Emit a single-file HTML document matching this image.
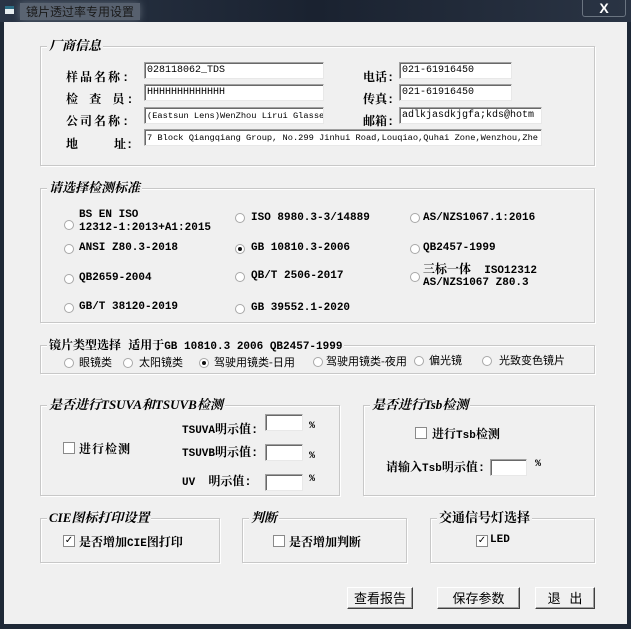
<!DOCTYPE html>
<html><head><meta charset="utf-8"><style>
*{margin:0;padding:0;box-sizing:border-box}
body{width:631px;height:629px;background:#1e2836;position:relative;overflow:hidden;font-family:"Liberation Mono","Noto Serif CJK SC",monospace;font-size:11px;font-weight:bold;color:#000}
.title{position:absolute;left:0;top:0;width:631px;height:22px;background:linear-gradient(90deg,#2a3546,#1a2230 50%,#2a3444);}
.title span{position:absolute;left:20px;top:3px;color:#1a1a1a;font-family:"Noto Sans CJK SC",sans-serif;font-weight:normal;font-size:12px;background:rgba(150,160,170,.45);padding:0 6px;box-shadow:0 0 8px rgba(150,160,170,.5)}
.ico{position:absolute;left:5px;top:6px;width:9px;height:8px;background:#e8eef0;border-top:3px solid #2c6d84}
.close{position:absolute;left:582px;top:0;width:44px;height:17px;border:1px solid #6a7480;border-top:none;border-radius:0 0 3px 3px;color:#fff;font-family:"Liberation Sans",sans-serif;font-size:14px;text-align:center;line-height:16px}
.client{position:absolute;left:4px;top:22px;width:623px;height:602px;background:#f0f0f0}
.a{position:absolute;white-space:nowrap}
.k{font-size:12px}
.g{position:absolute;border:1px solid #c8c8c8;box-shadow:inset 1px 1px 0 #fff,1px 1px 0 #fff}
.gl{position:absolute;background:#f0f0f0;padding:0 2px;font-style:italic;font-size:13px;top:-9px;left:6px;line-height:16px;font-family:"Liberation Serif","Noto Serif CJK SC",serif}
.in{position:absolute;background:#fff;border:1px solid #a0a0a0;border-right-color:#e8e8e8;border-bottom-color:#e8e8e8;box-shadow:inset 1px 1px 0 #696969;font-family:"Liberation Mono","Noto Sans CJK SC",monospace;font-weight:normal;font-size:8.7px;padding:2px 2px;overflow:hidden;white-space:nowrap;line-height:12px}
.in.big{font-size:10px}
.r{position:absolute;width:10px;height:10px;border-radius:50%;border:1px solid #a8a8a8;background:#fff}
.r.on::after{content:"";position:absolute;left:2px;top:2px;width:4px;height:4px;border-radius:50%;background:#111}
.c{position:absolute;width:12px;height:12px;border:1px solid #8a8a8a;background:#fff;font-size:10px;line-height:10px;text-align:center;font-family:"DejaVu Sans",sans-serif;font-weight:normal}
.n{font-weight:normal;font-family:"Noto Sans CJK SC",sans-serif;font-size:11px}
.b{position:absolute;height:22px;background:#f0f0f0;border:1px solid #fff;border-right-color:#404040;border-bottom-color:#404040;box-shadow:inset -1px -1px 0 #a0a0a0;text-align:center;line-height:20px;font-size:13px;font-weight:normal;font-family:"Noto Sans CJK SC",sans-serif}
</style></head><body>
<div class="title"><div class="ico"></div><span>镜片透过率专用设置</span><div class="close">X</div></div>
<div class="client"></div>
<div style="position:absolute;left:0;top:0">
<div class="g" style="left:40px;top:46px;width:555px;height:120px"><div class="gl">厂商信息</div></div>
<div class="a k" style="left:66px;top:68px;letter-spacing:2px">样品名称:</div>
<div class="a k" style="left:66px;top:90px;letter-spacing:2px">检 查 员:</div>
<div class="a k" style="left:66px;top:112px;letter-spacing:2px">公司名称:</div>
<div class="a k" style="left:66px;top:135px">地</div><div class="a k" style="left:114px;top:135px">址:</div>
<div class="a k" style="left:363px;top:68px">电话:</div>
<div class="a k" style="left:363px;top:90px">传真:</div>
<div class="a k" style="left:363px;top:112px">邮箱:</div>
<div class="in big" style="left:144px;top:62px;width:180px;height:17px">028118062_TDS</div>
<div class="in big" style="left:144px;top:84px;width:180px;height:17px">HHHHHHHHHHHHH</div>
<div class="in" style="left:144px;top:107px;width:180px;height:17px">(Eastsun Lens)WenZhou Lirui Glasses</div>
<div class="in" style="left:144px;top:129px;width:398px;height:17px">7 Block Qiangqiang Group, No.299 Jinhui Road,Louqiao,Quhai Zone,Wenzhou,Zhe</div>
<div class="in big" style="left:399px;top:62px;width:113px;height:17px">021-61916450</div>
<div class="in big" style="left:399px;top:84px;width:113px;height:17px">021-61916450</div>
<div class="in" style="left:399px;top:107px;width:143px;height:17px;font-size:10px">adlkjasdkjgfa;kds@hotm</div>

<div class="g" style="left:40px;top:188px;width:555px;height:135px"><div class="gl">请选择检测标准</div></div>
<div class="r" style="left:64px;top:220px"></div><div class="a" style="left:79px;top:209px;line-height:13px">BS EN ISO<br>12312-1:2013+A1:2015</div>
<div class="r" style="left:235px;top:213px"></div><div class="a" style="left:251px;top:212px">ISO 8980.3-3/14889</div>
<div class="r" style="left:410px;top:213px"></div><div class="a" style="left:423px;top:212px">AS/NZS1067.1:2016</div>
<div class="r" style="left:64px;top:244px"></div><div class="a" style="left:79px;top:242px">ANSI Z80.3-2018</div>
<div class="r on" style="left:235px;top:244px"></div><div class="a" style="left:251px;top:242px">GB 10810.3-2006</div>
<div class="r" style="left:410px;top:244px"></div><div class="a" style="left:423px;top:242px">QB2457-1999</div>
<div class="r" style="left:64px;top:274px"></div><div class="a" style="left:79px;top:272px">QB2659-2004</div>
<div class="r" style="left:235px;top:272px"></div><div class="a" style="left:251px;top:270px">QB/T 2506-2017</div>
<div class="r" style="left:410px;top:272px"></div><div class="a" style="left:423px;top:264px;line-height:12px"><span class="k">三标一体</span>&nbsp;&nbsp;ISO12312<br>AS/NZS1067 Z80.3</div>
<div class="r" style="left:64px;top:303px"></div><div class="a" style="left:79px;top:301px">GB/T 38120-2019</div>
<div class="r" style="left:235px;top:304px"></div><div class="a" style="left:251px;top:302px">GB 39552.1-2020</div>

<div class="g" style="left:40px;top:345px;width:555px;height:29px"><div class="gl" style="font-style:normal;font-size:11px;top:-8px;font-family:'Liberation Mono','Noto Serif CJK SC',monospace"><span class="k">镜片类型选择 适用于</span>GB 10810.3 2006 QB2457-1999</div></div>
<div class="r" style="left:64px;top:358px"></div><div class="a n" style="left:79px;top:354px">眼镜类</div>
<div class="r" style="left:123px;top:358px"></div><div class="a n" style="left:139px;top:354px">太阳镜类</div>
<div class="r on" style="left:199px;top:358px"></div><div class="a n" style="left:214px;top:354px">驾驶用镜类-日用</div>
<div class="r" style="left:313px;top:357px"></div><div class="a n" style="left:326px;top:353px">驾驶用镜类-夜用</div>
<div class="r" style="left:414px;top:356px"></div><div class="a n" style="left:429px;top:352px">偏光镜</div>
<div class="r" style="left:482px;top:356px"></div><div class="a n" style="left:499px;top:352px">光致变色镜片</div>

<div class="g" style="left:40px;top:405px;width:300px;height:91px"><div class="gl">是否进行TSUVA和TSUVB检测</div></div>
<div class="c" style="left:63px;top:442px"></div><div class="a k" style="left:79px;top:440px;letter-spacing:1px">进行检测</div>
<div class="a" style="left:182px;top:420px">TSUVA<span class="k">明示值:</span></div>
<div class="a" style="left:182px;top:443px">TSUVB<span class="k">明示值:</span></div>
<div class="a" style="left:182px;top:472px">UV&nbsp;&nbsp;<span class="k">明示值:</span></div>
<div class="in" style="left:265px;top:414px;width:38px;height:17px"></div>
<div class="in" style="left:265px;top:444px;width:38px;height:17px"></div>
<div class="in" style="left:265px;top:474px;width:38px;height:17px"></div>
<div class="a" style="left:309px;top:421px;font-size:10px">%</div>
<div class="a" style="left:309px;top:451px;font-size:10px">%</div>
<div class="a" style="left:309px;top:474px;font-size:10px">%</div>

<div class="g" style="left:363px;top:405px;width:232px;height:91px"><div class="gl">是否进行Tsb检测</div></div>
<div class="c" style="left:415px;top:427px"></div><div class="a" style="left:432px;top:425px"><span class="k">进行</span>Tsb<span class="k">检测</span></div>
<div class="a" style="left:386px;top:458px"><span class="k">请输入</span>Tsb<span class="k">明示值:</span></div>
<div class="in" style="left:490px;top:459px;width:37px;height:17px"></div>
<div class="a" style="left:535px;top:459px;font-size:10px">%</div>

<div class="g" style="left:40px;top:518px;width:180px;height:45px"><div class="gl">CIE图标打印设置</div></div>
<div class="c" style="left:63px;top:535px">✓</div><div class="a" style="left:79px;top:533px"><span class="k">是否增加</span>CIE<span class="k">图打印</span></div>
<div class="g" style="left:242px;top:518px;width:165px;height:45px"><div class="gl">判断</div></div>
<div class="c" style="left:273px;top:535px"></div><div class="a k" style="left:289px;top:533px">是否增加判断</div>
<div class="g" style="left:430px;top:518px;width:165px;height:45px"><div class="gl" style="font-style:normal">交通信号灯选择</div></div>
<div class="c" style="left:476px;top:535px">✓</div><div class="a" style="left:490px;top:534px">LED</div>

<div class="b" style="left:347px;top:587px;width:66px">查看报告</div>
<div class="b" style="left:437px;top:587px;width:83px">保存参数</div>
<div class="b" style="left:535px;top:587px;width:60px">退&nbsp;&nbsp;&nbsp;出</div>
</div>
</body></html>
